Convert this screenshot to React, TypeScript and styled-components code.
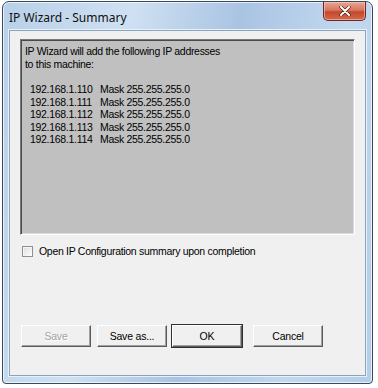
import React, { useState } from "react";
import styled, { createGlobalStyle } from "styled-components";

const GlobalStyle = createGlobalStyle`
  html, body {
    margin: 0;
    padding: 0;
    background: #ffffff;
  }
`;

const Page = styled.div`
  width: 378px;
  height: 388px;
  padding: 1px 0 0 2px;
  box-sizing: border-box;
`;

const Window = styled.div`
  width: 371px;
  height: 383px;
  box-sizing: border-box;
  border: 1px solid #38495c;
  border-radius: 7px 7px 4px 4px;
  background: linear-gradient(100deg, #b8d0e9 0%, #cfe0f2 30%, #a9c4e3 55%, #c2d8ef 80%, #b4cde8 100%);
  display: flex;
  flex-direction: column;
  padding: 0 6px 7px 6px;
  box-shadow: inset 0 0 0 1px rgba(255, 255, 255, 0.7);
`;

const TitleBar = styled.div`
  height: 28px;
  display: flex;
  align-items: flex-start;
  justify-content: space-between;
  flex-shrink: 0;
`;

const Title = styled.span`
  font-family: "Noto Sans", "DejaVu Sans", sans-serif;
  font-size: 12px;
  color: #101010;
  margin: 8px 0 0 0;
  line-height: 16px;
`;

const CloseButton = styled.div`
  width: 43px;
  height: 19px;
  box-sizing: border-box;
  border: 1px solid #6b2a22;
  border-top: none;
  border-radius: 0 0 5px 5px;
  background: linear-gradient(180deg, #e9a593 0%, #d7775f 45%, #c2482c 55%, #d46a4b 100%);
  display: flex;
  align-items: center;
  justify-content: center;
  box-shadow: inset 0 0 0 1px rgba(255, 220, 210, 0.5);
`;

const Client = styled.div`
  flex: 1;
  background: #f0f0f0;
  border: 1px solid #8aa3bf;
  box-shadow: 0 0 0 1px #e8f0f8;
  display: flex;
  flex-direction: column;
  padding: 8px 10px 0 10px;
  font-family: "Liberation Sans", Arial, sans-serif;
  font-size: 10.5px;
  letter-spacing: -0.3px;
  color: #000;
`;

const Panel = styled.div`
  height: 196px;
  box-sizing: border-box;
  background: #c0c0c0;
  border-style: solid;
  border-width: 1px;
  border-color: #7a7a7a #ffffff #ffffff #7a7a7a;
  box-shadow: inset 1px 1px 0 #4a4a4a, inset -1px -1px 0 #dcdcdc;
  padding: 5px 4px;
  line-height: 12.5px;
`;

const Para = styled.div`
  margin-bottom: 13px;
`;

const AddrRow = styled.div`
  display: flex;
  padding-left: 5px;
`;

const Ip = styled.span`
  width: 70px;
  flex-shrink: 0;
`;

const CheckRow = styled.label`
  display: flex;
  align-items: center;
  gap: 6px;
  margin: 10px 0 0 2px;
  cursor: default;
`;

const Box = styled.span<{ $checked: boolean }>`
  width: 11px;
  height: 11px;
  box-sizing: border-box;
  border: 1px solid #8e8f8f;
  background: ${(p) =>
    p.$checked ? "#ffffff" : "linear-gradient(135deg, #dcdcdc 0%, #ffffff 100%)"};
  box-shadow: inset 1px 1px 0 #f4f4f4;
`;

const ButtonRow = styled.div`
  margin-top: auto;
  margin-bottom: 28px;
  display: flex;
  padding-left: 1px;
`;

const Button = styled.button<{ $default?: boolean; $gap?: number }>`
  width: 70px;
  height: 22px;
  margin-right: ${(p) => p.$gap ?? 6}px;
  box-sizing: border-box;
  padding: 0;
  background: #f0f0f0;
  font-family: "Liberation Sans", Arial, sans-serif;
  font-size: 10.5px;
  letter-spacing: -0.2px;
  color: #000;
  border-style: solid;
  border-width: 1px;
  border-color: #ffffff #5a5a5a #5a5a5a #ffffff;
  box-shadow: inset -1px -1px 0 #a0a0a0;
  outline: ${(p) => (p.$default ? "1px solid #303030" : "none")};
  outline-offset: 0;
  &:disabled {
    color: #a4a4a4;
    text-shadow: 1px 1px 0 #ffffff;
  }
`;

const addresses = [
  "192.168.1.110",
  "192.168.1.111",
  "192.168.1.112",
  "192.168.1.113",
  "192.168.1.114",
];

export default function App() {
  const [checked, setChecked] = useState(false);
  return (
    <Page>
      <GlobalStyle />
      <Window>
        <TitleBar>
          <Title>IP Wizard - Summary</Title>
          <CloseButton>
            <svg width="12" height="10" viewBox="0 0 12 10">
              <path d="M2 1 L10 9 M10 1 L2 9" stroke="#4a1a10" strokeWidth="3.2" strokeLinecap="round" />
              <path d="M2 1 L10 9 M10 1 L2 9" stroke="#ffffff" strokeWidth="2" strokeLinecap="round" />
            </svg>
          </CloseButton>
        </TitleBar>
        <Client>
          <Panel>
            <Para>
              IP Wizard will add the following IP addresses
              <br />
              to this machine:
            </Para>
            {addresses.map((ip) => (
              <AddrRow key={ip}>
                <Ip>{ip}</Ip>
                <span>Mask 255.255.255.0</span>
              </AddrRow>
            ))}
          </Panel>
          <CheckRow onClick={() => setChecked(!checked)}>
            <Box $checked={checked} />
            Open IP Configuration summary upon completion
          </CheckRow>
          <ButtonRow>
            <Button disabled>Save</Button>
            <Button $gap={5}>Save as...</Button>
            <Button $default $gap={11}>OK</Button>
            <Button>Cancel</Button>
          </ButtonRow>
        </Client>
      </Window>
    </Page>
  );
}
